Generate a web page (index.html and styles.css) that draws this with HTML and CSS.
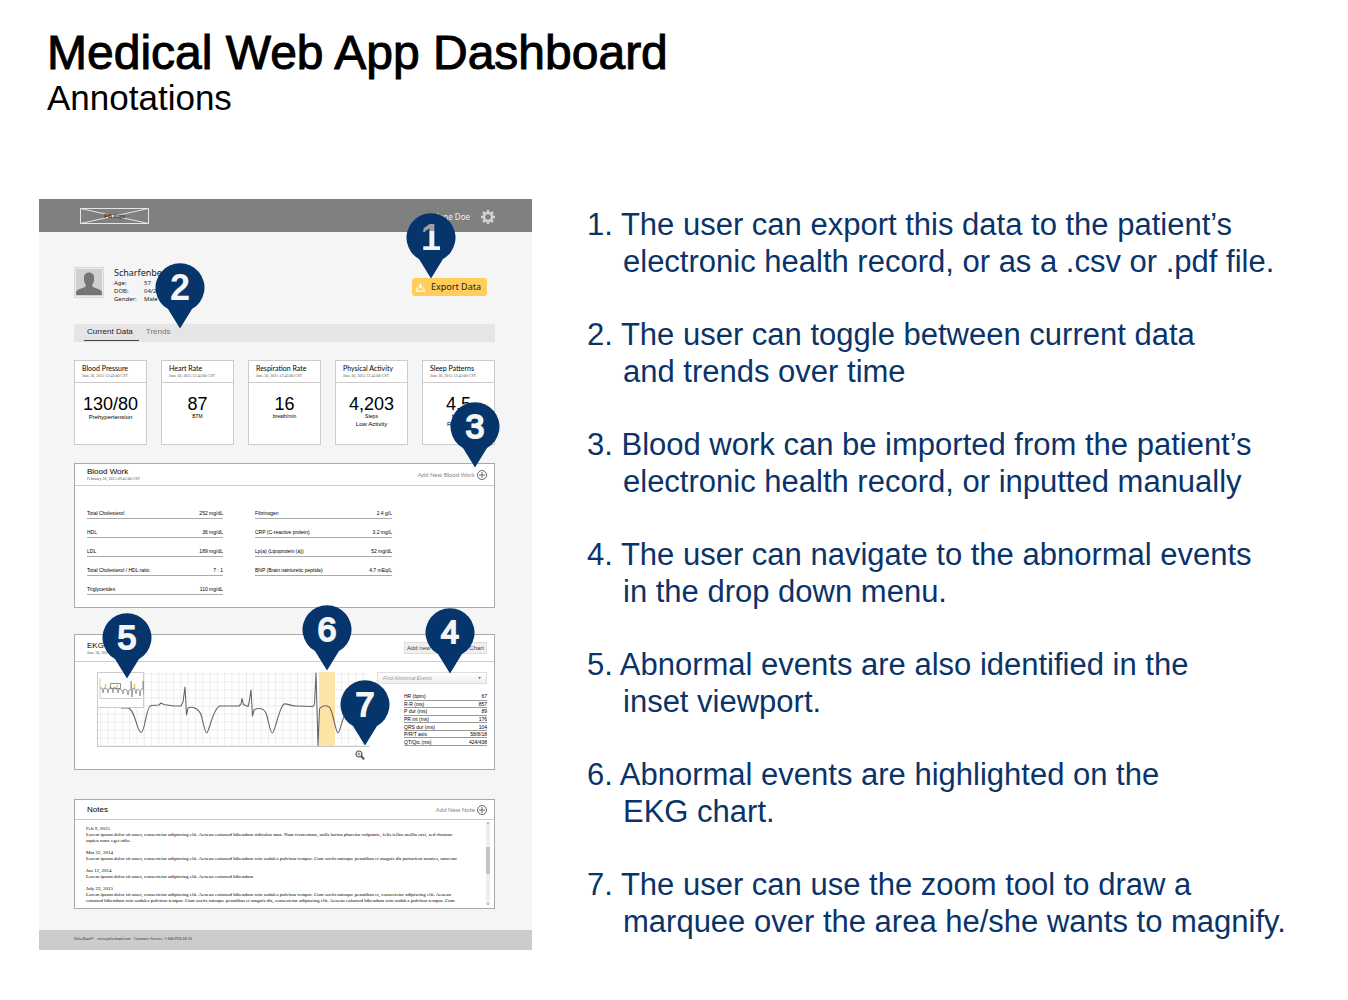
FILE: index.html
```html
<!DOCTYPE html>
<html lang="en">
<head>
<meta charset="utf-8">
<title>Medical Web App Dashboard</title>
<link rel="stylesheet" href="styles.css">
</head>
<body>
<header class="page-head">
  <h1>Medical Web App Dashboard</h1>
  <p class="subtitle">Annotations</p>
</header>
<main class="board">
  <section class="mock" aria-label="Dashboard">
    <header class="topbar">
      <div class="logo">
        <svg viewBox="0 0 69 16" preserveAspectRatio="none" aria-hidden="true"><path d="M.5.5h68v15H.5zM.5.5l68 15M68.5.5l-68 15" fill="none" stroke="#e4e4e4"/></svg>
        <span>PB logo</span>
      </div>
      <div class="account">
        <span>Jane Doe</span>
        <svg class="gear" viewBox="0 0 14 14" aria-hidden="true"><circle cx="7" cy="7" r="4" fill="none" stroke="#d2d2d2" stroke-width="2.400"/><path d="M7 0v2.500M7 11.500v2.500M0 7h2.500M11.500 7H14M2 2l1.900 1.900M10.100 10.100 12 12M12 2l-1.900 1.900M3.900 10.100 2 12" stroke="#d2d2d2" stroke-width="2.600"/></svg>
      </div>
    </header>
    <div class="content">
      <div class="patient">
        <svg class="avatar" viewBox="0 0 30 31" aria-hidden="true"><rect width="30" height="31" fill="#d8d8d8"/><rect x="1.500" y="1.500" width="27" height="28" fill="#cfcfcf" stroke="#ececec"/><path d="M2 28v-3c1-3 6-3.500 9-5 1-1 .8-2 .4-3C9.500 14 10 12.500 10 10c0-6 10-6 10 0 0 2.500.5 4-1.400 7-.4 1-.6 2 .4 3 3 1.500 8 2 9 5v3z" fill="#757575"/></svg>
        <div class="who">
          <h2>Scharfenberg, Mark</h2>
          <dl>
            <dt>Age:</dt><dd>57</dd>
            <dt>DOB:</dt><dd>04/21/58</dd>
            <dt>Gender:</dt><dd>Male</dd>
          </dl>
        </div>
        <button class="export" type="button">
          <svg viewBox="0 0 9 9" aria-hidden="true"><path d="M2 4.500.8 6.500v1.700h7.400V6.500L7 4.500" fill="none" stroke="#fff" stroke-width="1.200"/><path d="M3.700.5h1.600v2.700h1.500L4.500 5.800 2.200 3.200h1.500z" fill="#fff"/></svg>
          Export Data
        </button>
      </div>
      <nav class="tabs"><a class="on" href="#current">Current Data</a><a href="#trends">Trends</a></nav>
      <div class="cards">
        <article class="card"><header><h3>Blood Pressure</h3><p>June 30, 2015 12:45:00 CST</p></header><strong>130/80</strong><p class="state">Prehypertension</p></article>
        <article class="card"><header><h3>Heart Rate</h3><p>June 30, 2015 12:45:00 CST</p></header><strong>87</strong><p class="unit">BTM</p></article>
        <article class="card"><header><h3>Respiration Rate</h3><p>June 30, 2015 12:45:00 CST</p></header><strong>16</strong><p class="unit">breath/min</p></article>
        <article class="card"><header><h3>Physical Activity</h3><p>June 30, 2015 12:45:00 CST</p></header><strong>4,203</strong><p class="unit">Steps</p><p class="state">Low Activity</p></article>
        <article class="card"><header><h3>Sleep Patterns</h3><p>June 30, 2015 12:45:00 CST</p></header><strong>4.5</strong><p class="unit">Hours</p><p class="state">Restless</p></article>
      </div>
      <section class="panel blood">
        <header class="panel-head">
          <div><h3>Blood Work</h3><p>February 20, 2015 09:45:00 CST</p></div>
          <button class="add" type="button">Add New Blood Work <svg viewBox="0 0 10 10" aria-hidden="true"><path d="M5 2v6M2 5h6"/><circle cx="5" cy="5" r="4.500"/></svg></button>
        </header>
        <div class="labs">
          <table>
            <tr><td>Total Cholesterol</td><td>252 mg/dL</td></tr>
            <tr><td>HDL</td><td>36 mg/dL</td></tr>
            <tr><td>LDL</td><td>189 mg/dL</td></tr>
            <tr><td>Total Cholesterol / HDL ratio</td><td>7 : 1</td></tr>
            <tr><td>Triglycerides</td><td>110 mg/dL</td></tr>
          </table>
          <table>
            <tr><td>Fibrinogen</td><td>2.4 g/L</td></tr>
            <tr><td>CRP (C-reactive protein)</td><td>3.2 mg/L</td></tr>
            <tr><td>Lp(a) (Lipoprotein (a))</td><td>52 mg/dL</td></tr>
            <tr><td>BNP (Brain natriuretic peptide)</td><td>4.7 mEq/L</td></tr>
          </table>
        </div>
      </section>
      <section class="panel ekg">
        <header class="panel-head">
          <div><h3>EKG</h3><p>June 30, 2015</p></div>
          <button class="add-chart" type="button"><span>Add new EKG</span><span>to Chart</span></button>
        </header>
        <div class="ekg-body">
          <div class="trace">
            <svg class="wave" viewBox="0 0 273 75" role="img" aria-label="EKG chart">
              <defs><pattern id="grid" width="7.300" height="8" x="3" y="1.500" patternUnits="userSpaceOnUse"><path d="M0 .5h7.300M.5 0v8" stroke="#dedede" stroke-width=".8" stroke-dasharray="1.600 .8" fill="none"/></pattern></defs>
              <rect width="273" height="75" fill="url(#grid)"/>
              <path d="M.5 0v74.500H273" fill="none" stroke="#c8c8c8"/>
              <rect x="222" y="0" width="16" height="74" fill="#fde3a6"/>
              <path d="M24 36H31C38 37 40 60 44 60.500S49 34 54 33.500L62 33 64 31 67 32.500 77 34 84 34 86 30 88 15 89.500 43 91 36C95 34 102 36 104.300 43.500 106 50 108 61 109.700 61 112 61 116 36 122.700 34L142 34 144 32 145 26.500 146.500 32.500 151 34.500 152 31 154 18 155.500 44 157 38C160 36 166 35 169 41 172 50 173 61 175.300 61 178 61 182 35 187 32 190 31 193 34 199 34L216 34.500 217.500 32 219 1 221 73.500 222.500 37C225 33 232 32 234 38 237 46 239 61 241 61S247 36 254 34L273 34" fill="none" stroke="#666" stroke-width="1.100" stroke-linejoin="round"/>
            </svg>
            <svg class="inset" viewBox="0 0 47 36" role="img" aria-label="Inset viewport"><rect x=".5" y=".5" width="46" height="35" fill="#fff" stroke="#ccc"/><path d="M3 6v20.500h42" fill="none" stroke="#ccc"/><path d="M8 12h1v5H8zM19.500 13h1v4h-1zM37 12h1v5h-1z" fill="#fb3" stroke="#fc6" stroke-width=".6"/><path d="M3 16h2l1 5 1-5 3 1 1 4 1-5h3l1 5 1-6 3 2 1 4 1-4 3 1 1 4 1-5 3 1 1 5 1-5h2V9l1 16 1-9 2 1 1 5 1-5 2 1 1 6 1-7h2V9l1 14" fill="none" stroke="#888" stroke-width=".8"/><path d="M13.500 11.500h10v5h-10z" fill="none" stroke="#777" stroke-width=".8"/></svg>
            <svg class="zoom" viewBox="0 0 10 10" aria-hidden="true"><circle cx="4" cy="4" r="3" fill="none" stroke="#555" stroke-width="1.200"/><path d="M2.500 4h3M4 2.500v3" stroke="#555" stroke-width=".7"/><path d="M6 6l3.200 3.200" stroke="#555" stroke-width="2"/></svg>
          </div>
          <div class="readings">
            <select aria-label="Find Abnormal Events"><option>Find Abnormal Events</option></select>
            <table>
              <tr><td>HR (bpm)</td><td>67</td></tr>
              <tr><td>R-R (ms)</td><td>857</td></tr>
              <tr><td>P dur (ms)</td><td>89</td></tr>
              <tr><td>PR int (ms)</td><td>176</td></tr>
              <tr><td>QRS dur (ms)</td><td>104</td></tr>
              <tr><td>P/R/T axis</td><td>58/8/18</td></tr>
              <tr><td>QT/Qtc (ms)</td><td>424/438</td></tr>
            </table>
          </div>
        </div>
      </section>
      <section class="panel notes">
        <header class="panel-head">
          <h3>Notes</h3>
          <button class="add" type="button">Add New Note <svg viewBox="0 0 10 10" aria-hidden="true"><path d="M5 2v6M2 5h6"/><circle cx="5" cy="5" r="4.500"/></svg></button>
        </header>
        <div class="notes-body">
          <div class="entries">
            <p>Feb 9, 2015<br>Lorem ipsum dolor sit amet, consectetur adipiscing elit. Aenean euismod bibendum  ridiculus mus. Nam fermentum, nulla luctus pharetra vulputate, felis tellus mollis orci, sed rhoncus<br>sapien nunc eget odio.</p>
            <p>Mar 22, 2014<br>Lorem ipsum dolor sit amet, consectetur adipiscing elit. Aenean euismod bibendum roin sodales pulvinar tempor. Cum sociis natoque penatibus et magnis dis parturient montes, nascetur</p>
            <p>Jan 12, 2014<br>Lorem ipsum dolor sit amet, consectetur adipiscing elit. Aenean euismod bibendum</p>
            <p>July 23, 2015<br>Lorem ipsum dolor sit amet, consectetur adipiscing elit. Aenean euismod bibendum roin sodales pulvinar tempor. Cum sociis natoque penatibus et, consectetur adipiscing elit. Aenean<br>euismod bibendum roin sodales pulvinar tempor. Cum sociis natoque penatibus et magnis dis, consectetur adipiscing elit. Aenean euismod bibendum roin sodales pulvinar tempor. Cum</p>
          </div>
          <div class="scroll" aria-hidden="true"><i class="up"></i><i class="thumb"></i><i class="down"></i></div>
        </div>
      </section>
    </div>
    <footer class="foot"><span>PulseBand®</span><span>www.pulseband.com</span><span>Customer Service: 1-800-PULSE-01</span></footer>

    <div class="pin pin-1"><svg viewBox="0 0 50 66" aria-hidden="true"><path d="M13 46a24.500 24.500 0 1 1 24 0L25 65.500z"/></svg><b>1</b></div>
    <div class="pin pin-2"><svg viewBox="0 0 50 66" aria-hidden="true"><path d="M13 46a24.500 24.500 0 1 1 24 0L25 65.500z"/></svg><b>2</b></div>
    <div class="pin pin-3"><svg viewBox="0 0 50 66" aria-hidden="true"><path d="M13 46a24.500 24.500 0 1 1 24 0L25 65.500z"/></svg><b>3</b></div>
    <div class="pin pin-4"><svg viewBox="0 0 50 66" aria-hidden="true"><path d="M13 46a24.500 24.500 0 1 1 24 0L25 65.500z"/></svg><b>4</b></div>
    <div class="pin pin-5"><svg viewBox="0 0 50 66" aria-hidden="true"><path d="M13 46a24.500 24.500 0 1 1 24 0L25 65.500z"/></svg><b>5</b></div>
    <div class="pin pin-6"><svg viewBox="0 0 50 66" aria-hidden="true"><path d="M13 46a24.500 24.500 0 1 1 24 0L25 65.500z"/></svg><b>6</b></div>
    <div class="pin pin-7"><svg viewBox="0 0 50 66" aria-hidden="true"><path d="M13 46a24.500 24.500 0 1 1 24 0L25 65.500z"/></svg><b>7</b></div>
  </section>

  <ol class="annotations">
    <li>1. The user can export this data to the patient’s<br>electronic health record, or as a .csv or .pdf file.</li>
    <li>2. The user can toggle between current data<br>and trends over time</li>
    <li>3. Blood work can be imported from the patient’s<br>electronic health record, or inputted manually</li>
    <li>4. The user can navigate to the abnormal events<br>in the drop down menu.</li>
    <li>5. Abnormal events are also identified in the<br>inset viewport.</li>
    <li>6. Abnormal events are highlighted on the<br>EKG chart.</li>
    <li>7. The user can use the zoom tool to draw a<br>marquee over the area he/she wants to magnify.</li>
  </ol>
</main>
</body>
</html>
```
FILE: styles.css
```css
* { box-sizing: border-box; }
body, h1, h2, h3, p, dl, dd, ol { margin: 0; padding: 0; }
body { background: #fff; color: #000; font-family: "Liberation Sans", Arial, sans-serif; }
svg { display: block; flex: none; }
button, select { font: inherit; color: inherit; margin: 0; padding: 0; border: 0; background: none; }
h2, h3 { font-weight: 400; }

.page-head { padding: 27px 47px 0; }
h1 { font-size: 48px; line-height: 52px; font-weight: 400; -webkit-text-stroke: 1px #000; white-space: nowrap; }
.subtitle { font-size: 35px; line-height: 38px; }

.board { display: grid; grid-template-columns: minmax(0, 493fr) minmax(0, 722fr); gap: 55px; align-items: start; padding: 82px 39px 50px; }

.annotations { list-style: none; display: grid; gap: 36px; padding-top: 7px; color: #0a3469; font-size: 31px; line-height: 37px; white-space: nowrap; }
.annotations li { padding-left: 36px; text-indent: -36px; }

.mock { position: relative; background: #f5f5f5; }
.topbar { display: flex; justify-content: space-between; align-items: center; height: 33px; padding: 0 37px 0 41px; background: #808080; }
.logo { display: grid; width: 69px; height: 16px; place-items: center; color: #111; font-size: 6px; line-height: 14px; }
.logo > * { grid-area: 1 / 1; }
.logo svg { width: 69px; height: 16px; }
.account { display: flex; align-items: center; gap: 11px; color: #eee; font: 8px/14px "Noto Sans", sans-serif; padding-top: 2px; }
.gear { width: 14px; height: 14px; }

.content { padding: 35px 37px 21px 35px; }
.patient { display: flex; align-items: flex-start; height: 36px; color: #222; font: 7px/8px "Noto Sans", sans-serif; }
.avatar { width: 30px; height: 31px; }
.who { flex: 1; padding-left: 10px; }
.who h2 { font-size: 9px; line-height: 12px; }
.who dl { display: grid; grid-template-columns: 30px auto; font-size: 6px; }
.export { display: flex; align-items: center; gap: 6px; height: 18px; margin: 11px 8px 0 0; padding: 0 6px 0 4px; border-radius: 3px; background: #ffcd5a; font-size: 9px; }
.export svg { width: 9px; height: 9px; }

.tabs { display: flex; gap: 7px; height: 18px; margin-top: 21px; padding-left: 10px; background: #e5e5e5; font-size: 8px; line-height: 16px; }
.tabs a { height: 17px; color: #777; text-decoration: none; }
.tabs .on { padding: 0 6px 0 3px; color: #222; border-bottom: 1px solid #444; }

.cards { display: grid; grid-template-columns: repeat(5, minmax(0, 1fr)); gap: 14px; margin-top: 18px; }
.card { height: 85px; border: 1px solid #ccc; background: #fff; text-align: center; }
.card header { height: 22px; padding: 3px 0 0 7px; border-bottom: 1px solid #ccc; text-align: left; white-space: nowrap; }
.card h3 { font: 7px/9px Lato, sans-serif; }
.card header p, .panel-head p { color: #555; font: 4px/6px "Liberation Serif", serif; }
.card strong { display: block; padding-top: 12px; font-size: 18px; line-height: 18px; font-weight: 400; }
.unit { font-size: 5px; line-height: 6px; }
.state { font-size: 6px; line-height: 8px; }
.unit + .state { margin-top: 1px; }

.panel { border: 1px solid #aaa; background: #fff; }
.panel-head { display: flex; justify-content: space-between; align-items: center; height: 22px; padding: 0 7px 0 12px; border-bottom: 1px solid #ccc; }
.panel h3 { font-size: 8px; line-height: 9px; }
.add { display: flex; align-items: center; gap: 2px; color: #888; font: 6px/10px Lato, sans-serif; }
.add svg { width: 10px; height: 10px; fill: none; stroke: #666; stroke-width: 1px; }

table { border-collapse: collapse; width: 100%; }
td { padding: 0; white-space: nowrap; }
td + td { text-align: right; }

.blood { height: 145px; margin-top: 18px; }
.labs { display: grid; grid-template-columns: 136px 137px; gap: 32px; align-items: start; padding: 13px 12px 0; font-size: 5px; line-height: 7px; }
.labs td { height: 19px; vertical-align: bottom; padding-bottom: 1px; border-bottom: 1px solid #aaa; }

.ekg { height: 136px; margin-top: 26px; }
.ekg .panel-head { height: 27px; }
.add-chart { display: flex; justify-content: space-between; width: 83px; height: 12px; padding: 0 2px; border: 1px solid #ddd; background: #f0f0f0; color: #444; font-size: 6px; line-height: 10px; }
.ekg-body { display: flex; justify-content: space-between; padding: 10px 7px 0 22px; }
.trace { position: relative; width: 273px; }
.wave { width: 100%; height: 75px; }
.inset { position: absolute; left: 0; top: 0; width: 47px; height: 36px; }
.zoom { width: 10px; height: 10px; margin: 3px 5px 0 auto; }
.readings { flex: 1; padding-left: 7px; }
.readings select { display: block; appearance: none; width: 100%; height: 12px; padding: 0 5px; border: 1px solid #ddd; border-radius: 0; color: #999; font-size: 5px; font-style: italic; background: linear-gradient(45deg, transparent 50%, #888 0) right 6px center / 2px 2px no-repeat, linear-gradient(135deg, #888 50%, transparent 0) right 4px center / 2px 2px no-repeat, linear-gradient(#fff, #eee); }
.readings table { width: 83px; height: 53px; margin: 9px 0 0 auto; font-size: 5px; line-height: 6px; }
.readings td { border-bottom: 1px solid #999; }

.notes { height: 110px; margin-top: 29px; }
.notes .panel-head { height: 20px; }
.notes-body { display: flex; justify-content: space-between; padding: 2px 4px 0 11px; }
.entries { flex: 1; min-width: 0; display: grid; gap: 6px; align-content: start; padding-top: 4px; color: #000; font: 5px/6px "Liberation Serif", serif; white-space: nowrap; }
.scroll { display: flex; flex: none; flex-direction: column; align-items: center; width: 4px; height: 83px; background: #eee; }
.scroll i { width: 2px; height: 2px; background: #bbb; }
.scroll .thumb { width: 4px; height: 27px; margin: 23px 0 auto; background: #c4c4c4; }

.foot { display: flex; gap: 3px; height: 20px; padding-left: 35px; background: #ccc; color: #333; font: 4px/17px "Liberation Serif", serif; }

.pin { position: absolute; width: 50px; height: 66px; }
.pin svg { width: 50px; height: 66px; fill: #06356b; }
.pin b { position: absolute; inset: 0 0 auto; text-align: center; color: #f5f5f5; font-size: 34px; line-height: 48px; font-weight: 400; -webkit-text-stroke: 2px #f5f5f5; }
.pin-1 { left: 367px; top: 14px; }
.pin-2 { left: 116px; top: 64px; }
.pin-3 { left: 411px; top: 203px; }
.pin-4 { left: 386px; top: 409px; }
.pin-5 { left: 63px; top: 414px; }
.pin-6 { left: 263px; top: 406px; }
.pin-7 { left: 301px; top: 481px; }
.pin-1 b, .pin-2 b { font-size: 36px; line-height: 50px; font-weight: 700; -webkit-text-stroke: 0; }
.pin-1 b { color: transparent; background: linear-gradient(#a0a0a0 18px, #f5f5f5 0); background-clip: text; }
.pin-4 b { font-size: 32px; }
```
